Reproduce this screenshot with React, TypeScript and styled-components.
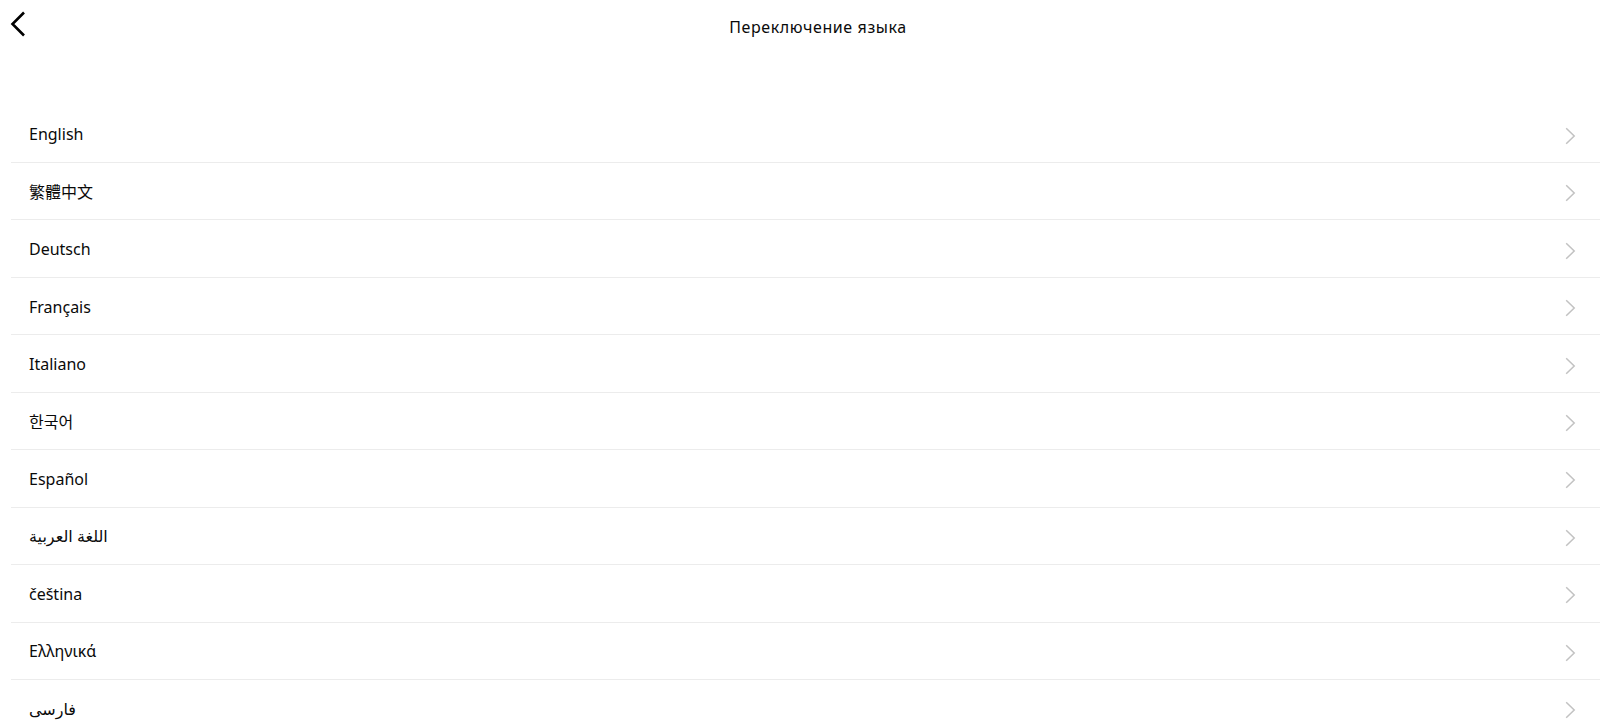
import React from "react";
import styled, { createGlobalStyle } from "styled-components";

const Global = createGlobalStyle`
  html, body { margin: 0; padding: 0; background: #fff; }
  body { font-family: "Noto Sans", "Noto Sans CJK SC", "Noto Sans CJK KR", "DejaVu Sans", sans-serif; color: #000; }
  * { box-sizing: border-box; }
`;

const Page = styled.div`
  width: 100%;
  height: 721px;
  overflow: hidden;
  background: #fff;
`;

const Header = styled.header`
  height: 52px;
  display: flex;
  align-items: center;
`;

const BackButton = styled.button`
  width: 36px;
  height: 48px;
  flex: 0 0 36px;
  padding: 0 0 0 9px;
  margin-top: -4px;
  border: 0;
  background: transparent;
  display: flex;
  align-items: center;
  justify-content: flex-start;
  cursor: pointer;
`;

const Title = styled.h1`
  flex: 1;
  margin: 0;
  margin-top: 2px;
  text-align: center;
  font-size: 16px;
  font-weight: 400;
  letter-spacing: 0.6px;
  color: #0a0a0a;
`;

const List = styled.ul`
  list-style: none;
  margin: 53.6px 0 0 11px;
  padding: 0;
`;

const Row = styled.li`
  height: 57.44px;
  display: flex;
  align-items: center;
  justify-content: space-between;
  padding: 0 24px 0 18px;
  border-bottom: 1px solid #ececec;
`;

const Label = styled.span`
  font-size: 16px;
  color: #0a0a0a;
  line-height: 1;
  margin-top: 1px;
`;

const ChevronRight = () => (
  <svg width="11" height="18" viewBox="0 0 11 18" fill="none" style={{ marginTop: 4 }}>
    <path d="M1.2 1.2 L9.2 9 L1.2 16.8" stroke="#c2c2c2" strokeWidth="1.5" />
  </svg>
);

const ChevronLeft = () => (
  <svg width="17" height="26" viewBox="0 0 17 26" fill="none">
    <path d="M15 1.5 L3.5 13 L15 24.5" stroke="#000" strokeWidth="2.6" />
  </svg>
);

const languages = [
  "English",
  "繁體中文",
  "Deutsch",
  "Français",
  "Italiano",
  "한국어",
  "Español",
  "اللغة العربية",
  "čeština",
  "Ελληνικά",
  "فارسی",
];

export default function App() {
  return (
    <Page>
      <Global />
      <Header>
        <BackButton aria-label="back">
          <ChevronLeft />
        </BackButton>
        <Title>Переключение языка</Title>
      </Header>
      <List>
        {languages.map((l) => (
          <Row key={l}>
            <Label>{l}</Label>
            <ChevronRight />
          </Row>
        ))}
      </List>
    </Page>
  );
}
